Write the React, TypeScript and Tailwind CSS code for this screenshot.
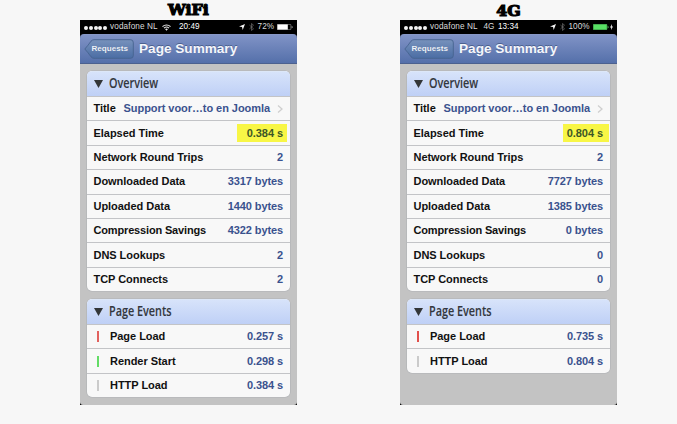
import React from "react";

type Row = { label: string; value: string; marker?: string; highlight?: string; link?: boolean; tight?: boolean };

type Phone = {
  network: string;
  fourG?: boolean;
  time: string;
  battery: string;
  charging?: boolean;
  overview: Row[];
  events: Row[];
};

const phones: Phone[] = [
  {
    network: "WiFi",
    time: "20:49",
    battery: "72%",
    overview: [
      { label: "Title", value: "Support voor…to en Joomla", link: true },
      { label: "Elapsed Time", value: "0.384 s", highlight: "w-[50px] mr-[3px] pr-[4px]" },
      { label: "Network Round Trips", value: "2" },
      { label: "Downloaded Data", value: "3317 bytes" },
      { label: "Uploaded Data", value: "1440 bytes" },
      { label: "Compression Savings", value: "4322 bytes", tight: true },
      { label: "DNS Lookups", value: "2" },
      { label: "TCP Connects", value: "2" },
    ],
    events: [
      { label: "Page Load", value: "0.257 s", marker: "bg-[#e2625f]" },
      { label: "Render Start", value: "0.298 s", marker: "bg-[#63dc66]" },
      { label: "HTTP Load", value: "0.384 s", marker: "bg-[#cbcbcb]" },
    ],
  },
  {
    network: "4G",
    fourG: true,
    time: "13:34",
    battery: "100%",
    charging: true,
    overview: [
      { label: "Title", value: "Support voor…to en Joomla", link: true },
      { label: "Elapsed Time", value: "0.804 s", highlight: "w-[46px] mr-[1px] pr-[6px]" },
      { label: "Network Round Trips", value: "2" },
      { label: "Downloaded Data", value: "7727 bytes" },
      { label: "Uploaded Data", value: "1385 bytes" },
      { label: "Compression Savings", value: "0 bytes", tight: true },
      { label: "DNS Lookups", value: "0" },
      { label: "TCP Connects", value: "0" },
    ],
    events: [
      { label: "Page Load", value: "0.735 s", marker: "bg-[#e2504c]" },
      { label: "HTTP Load", value: "0.804 s", marker: "bg-[#cbcbcb]" },
    ],
  },
];

function StatusBar({ phone }: { phone: Phone }) {
  return (
    <div className="flex h-[14px] shrink-0 items-center bg-black pt-[1px] pr-[4px] pl-[4px] text-[8.2px] leading-none whitespace-nowrap text-[#dadada]">
      <div className="flex w-[23px] gap-[0.8px]">
        {[0, 1, 2, 3, 4].map((i) => (
          <span key={i} className="size-[4px] rounded-full bg-[#f2f2f2]" />
        ))}
      </div>
      <span className="ml-[3px] w-[48px] tracking-[0.12px]">vodafone NL</span>
      {phone.fourG ? (
        <span className="ml-[5.5px] w-[14.5px]">4G</span>
      ) : (
        <svg className="ml-[4px] mr-[8px] h-[7px] w-[9px]" viewBox="0 0 18 14" fill="none" stroke="#e6e6e6" strokeWidth="2.2">
          <path d="M1 5.2a11.5 11.5 0 0 1 16 0M4 8.4a7.2 7.2 0 0 1 10 0" />
          <path d="M6.2 10.6a4 4 0 0 1 5.6 0L9 13.5z" fill="#e6e6e6" stroke="none" />
        </svg>
      )}
      <span className="text-white">{phone.time}</span>
      <div className="ml-auto flex items-center">
        <svg className="h-[6px] w-[6px]" viewBox="0 0 12 12" fill="#f4f4f4">
          <path d="M12 0L7.4 12L6 6.2L0 5.2z" />
        </svg>
        <svg className="ml-[3.5px] mr-[4px] h-[8px] w-[5px]" viewBox="0 0 10 16" fill="none" stroke="#777" strokeWidth="1.3">
          <path d="M1 4.2l8 7.4L5 15V1l4 3.4-8 7.4" />
        </svg>
        <span>{phone.battery}</span>
        <svg className={phone.charging ? "ml-[3px] h-[6px] w-[17px]" : "ml-[3px] h-[6px] w-[16px]"} viewBox={phone.charging ? "0 0 17 6" : "0 0 16 6"}>
          <rect x="0.3" y="0.3" width="13.6" height="5.4" rx="0.8" fill="none" stroke={phone.charging ? "#58d365" : "#aaa"} strokeWidth="0.6" />
          <rect x="0.4" y="0.4" width={phone.charging ? 13.4 : 10.4} height="5.2" fill={phone.charging ? "#58e064" : "#fff"} />
          <path d="M14.7 2v2.2q1-.3 1-1.1T14.7 2z" fill={phone.charging ? "#58d365" : "#bbb"} />
        </svg>
        {phone.charging && (
          <svg className="ml-[0.5px] h-[6px] w-[3px]" viewBox="0 0 6 12" fill="#f2f2f2">
            <path d="M4 0L0 7h2.5L2 12l4-7H3.5z" />
          </svg>
        )}
      </div>
    </div>
  );
}

function NavBar() {
  return (
    <div className="flex h-[30px] shrink-0 bg-black">
      <div className="flex w-full items-center rounded-t-[4px] border-t border-b border-t-[#8797c6] border-b-[#4c618f] bg-linear-to-b from-[#8093c6] to-[#5570aa] pl-[4px]">
        <div className="relative flex h-[20px] w-[50px] items-center">
          <svg className="absolute inset-0 h-[20px] w-[50px]" viewBox="0 0 50 20">
            <defs>
              <linearGradient id="back" x1="0" y1="0" x2="0" y2="1">
                <stop offset="0" stopColor="#7792bc" />
                <stop offset="1" stopColor="#4b6da4" />
              </linearGradient>
            </defs>
            <path
              d="M.8 10Q4 6.5 7 2.2Q8.3.7 10 .7H46.5Q49.3.7 49.3 3.5V16.5Q49.3 19.3 46.5 19.3H10Q8.3 19.3 7 17.8Q4 13.5.8 10Z"
              fill="url(#back)"
              stroke="#46638f"
              strokeWidth="0.9"
            />
          </svg>
          <span className="relative ml-[7.5px] text-[8.1px] leading-none font-bold text-[#f1f5fb] [text-shadow:0_-0.5px_0_#3b5582]">Requests</span>
        </div>
        <span className="ml-[5px] text-[13.6px] leading-none font-bold whitespace-nowrap text-[#f5f6fb] [text-shadow:0_-1px_0_#4c618f]">Page Summary</span>
      </div>
    </div>
  );
}

function Card({ title, rows }: { title: string; rows: Row[] }) {
  return (
    <section className="overflow-hidden rounded-[5px] bg-[#f8f8f8] shadow-[0_0_0_0.6px_#b0b2b5]">
      <header className="flex h-[25px] items-center border-t border-t-[#dce7f8] bg-linear-to-b from-[#d7e3fa] to-[#bfd0f6] pl-[7px]">
        <svg className="h-[8px] w-[9px]" viewBox="0 0 9 8" fill="#333638">
          <path d="M0 0H9L4.5 8Z" />
        </svg>
        <h2 className="-mt-[2px] ml-[6px] origin-left scale-x-[0.78] font-['Open_Sans',sans-serif] text-[13.9px] leading-none font-semibold whitespace-nowrap text-[#33373d] [-webkit-text-stroke:0.1px_#33373d]">{title}</h2>
      </header>
      {rows.map((row) => (
        <div key={row.label} className="flex h-[24.4px] items-center border-t border-[#c3c4c7] pl-[7px] text-[11px] leading-none font-bold whitespace-nowrap">
          {row.marker && <span className={`ml-[3.5px] mr-[11.5px] h-[11px] w-[1.5px] ${row.marker}`} />}
          <span className={row.tight ? "tracking-[-0.16px] text-[#111]" : "tracking-[-0.04px] text-[#111]"}>{row.label}</span>
          {row.highlight ? (
            <span className={`-mt-[1px] ml-auto flex h-[18px] items-center justify-end bg-[#f8f646] pt-[1px] tracking-[-0.06px] text-[#3d5626] ${row.highlight}`}>{row.value}</span>
          ) : (
            <span className={`ml-auto mr-[7px] text-[#3a528e] ${row.link ? "tracking-[-0.06px]" : "tracking-[-0.1px]"}`}>{row.value}</span>
          )}
          {row.link && (
            <svg className="mr-[7px] h-[8px] w-[6px]" viewBox="0 0 6 8" fill="none" stroke="#cfcfcf" strokeWidth="1.3">
              <path d="M1 .5L5 4L1 7.5" />
            </svg>
          )}
        </div>
      ))}
    </section>
  );
}

export default function App() {
  return (
    <main className="flex h-[424px] w-[677px] gap-[103px] overflow-hidden bg-[#f7f7f7] pl-[80px] font-['Liberation_Sans',Arial,sans-serif]">
      {phones.map((phone) => (
        <div key={phone.network} className="flex w-[217px] flex-col">
          <h1
            className={`flex h-[20px] scale-x-[1.13] items-center justify-center font-['DejaVu_Serif',serif] text-[14px] leading-none font-bold text-black [-webkit-text-stroke:1.1px_black] ${phone.fourG ? "pt-[1px]" : ""}`}
          >
            {phone.network}
          </h1>
          <div className="h-[385px] bg-black">
            <div className="flex h-full flex-col overflow-hidden rounded-b-[3px] bg-[#c3c3c3]">
              <StatusBar phone={phone} />
              <NavBar />
              <div className="flex flex-col gap-[7.8px] pt-[7px] pr-[7px] pl-[6.5px]">
                <Card title="Overview" rows={phone.overview} />
                <Card title="Page Events" rows={phone.events} />
              </div>
            </div>
          </div>
        </div>
      ))}
    </main>
  );
}
